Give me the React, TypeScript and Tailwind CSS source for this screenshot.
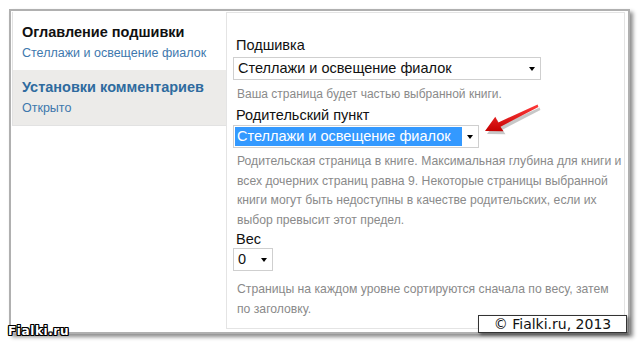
function Caret() {
    return <span className="block w-0 h-0 border-l-[3px] border-r-[3px] border-t-[4px] border-l-transparent border-r-transparent border-t-black" />;
}

function FakeSelect({ value, width, selected }: { value: string; width: string; selected?: boolean }) {
    return (
        <div className={`${width} h-[23px] border border-[#cfcfcf] bg-white flex items-center p-[1px] text-[14.5px] text-[#111]`}>
            <div
                className={
                    selected
                        ? 'flex-1 h-full flex items-center pl-[2px] bg-[#3399ff] text-white'
                        : 'flex-1 h-full flex items-center pl-[3px]'
                }
            >
                {value}
            </div>
            <div className="w-[15px] flex justify-center">
                <Caret />
            </div>
        </div>
    );
}

export default function App() {
    return (
        <div className="relative w-[640px] h-[345px] bg-white overflow-hidden font-['Liberation_Sans',Arial,sans-serif]">
            <div className="ml-[9px] mt-[9px] w-[621px] h-[325px] border-2 border-[#b0b0b0] shadow-[3px_3px_4px_rgba(0,0,0,0.45)] flex p-[1px] pr-[3px] pb-[3px] bg-white">
                {/* vertical tabs */}
                <div className="w-[214px] flex flex-col">
                    <div className="border-l border-[#e2e2e2] pl-[9px] pt-[10px] pb-[7px] bg-white">
                        <div className="text-[14.5px] leading-[20px] font-bold text-[#111]">Оглавление подшивки</div>
                        <div className="text-[12.5px] leading-[20px] text-[#3e78ad] mt-[1px]">Стеллажи и освещение фиалок</div>
                    </div>
                    <div className="border-l border-b border-[#e2e2e2] pl-[9px] pt-[7px] pb-[7px] bg-[#ecebe9]">
                        <div className="text-[14.5px] leading-[20px] font-bold text-[#2f6b9f]">Установки комментариев</div>
                        <div className="text-[12.5px] leading-[20px] text-[#3e78ad] mt-[1px]">Открыто</div>
                    </div>
                </div>

                {/* pane */}
                <div className="flex-1 border border-[#e4e4e4] pl-[6px] pr-[2px] pt-[22px]">
                    <div className="text-[14.5px] leading-[20px] text-[#111] pl-[3px]">Подшивка</div>
                    <div className="mt-[2px]">
                        <FakeSelect value="Стеллажи и освещение фиалок" width="w-[308px]" />
                    </div>
                    <div className="text-[12px] leading-[20px] text-[#8a8a8a] pl-[4px] mt-[4px]">
                        Ваша страница будет частью выбранной книги.
                    </div>
                    <div className="text-[14.5px] leading-[20px] text-[#111] pl-[3px] mt-[1px]">Родительский пункт</div>
                    <div>
                        <FakeSelect value="Стеллажи и освещение фиалок" width="w-[246px]" selected />
                    </div>
                    <div className="text-[12.2px] leading-[19.5px] text-[#8a8a8a] pl-[4px] mt-[4px]">
                        Родительская страница в книге. Максимальная глубина для книги и всех дочерних страниц равна 9. Некоторые страницы выбранной книги могут быть недоступны в качестве родительских, если их выбор превысит этот предел.
                    </div>
                    <div className="text-[14.5px] leading-[18px] text-[#111] pl-[3px]">Вес</div>
                    <div>
                        <FakeSelect value="0" width="w-[40px]" />
                    </div>
                    <div className="text-[12.2px] leading-[20px] text-[#8a8a8a] pl-[4px] mt-[8px]">
                        Страницы на каждом уровне сортируются сначала по весу, затем по заголовку.
                    </div>
                </div>
            </div>

            {/* red arrow annotation */}
            <svg className="absolute left-0 top-0 pointer-events-none" width="640" height="345" viewBox="0 0 640 345">
                <defs>
                    <linearGradient id="arr" x1="0" y1="0" x2="0" y2="1">
                        <stop offset="0" stopColor="#ff3b3b" />
                        <stop offset="1" stopColor="#c40000" />
                    </linearGradient>
                </defs>
                <polygon
                    points="487,134 497.3,119.7 500.3,125.4 539.6,107.6 540.4,109.9 502.5,129.7 505.5,134.3"
                    fill="#000"
                    opacity="0.22"
                />
                <polygon
                    points="485,131 495.3,116.7 498.3,122.4 537.6,104.6 538.4,106.9 500.5,126.7 503.5,131.3"
                    fill="url(#arr)"
                />
            </svg>

            {/* copyright */}
            <div className="absolute left-[478px] top-[315px] w-[149px] h-[18px] bg-white border border-[#333] shadow-[2px_2px_3px_rgba(0,0,0,0.5)] flex items-center justify-center text-[14px] text-[#111] font-['DejaVu_Sans',sans-serif]">
                © Fialki.ru, 2013
            </div>

            {/* watermark */}
            <div className="absolute left-[8px] top-[324px] text-[12px] leading-[14px] tracking-[0.6px] font-bold text-white font-['DejaVu_Sans',sans-serif] [text-shadow:1px_0_0_#000,-1px_0_0_#000,0_1px_0_#000,0_-1px_0_#000,1px_1px_0_#000,-1px_-1px_0_#000,1px_-1px_0_#000,-1px_1px_0_#000]">
                Fialki.ru
            </div>
        </div>
    );
}
